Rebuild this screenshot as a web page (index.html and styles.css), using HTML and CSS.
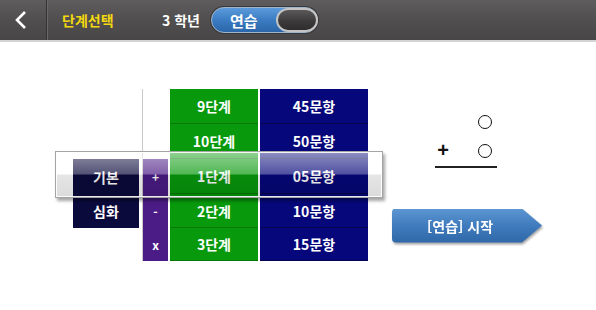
FILE: index.html
```html
<!DOCTYPE html>
<html lang="ko">
<head>
<meta charset="UTF-8">
<title>단계선택</title>
<link rel="stylesheet" href="styles.css">
</head>
<body>

<div class="topbar">
    <div class="back">
        <svg width="14" height="20" viewBox="0 0 14 20"><polyline points="11,2 3,10 11,18" fill="none" stroke="#fff" stroke-width="2.6" stroke-linejoin="miter"/></svg>
    </div>
    <div class="title">단계선택</div>
    <div class="grade">3 학년</div>
    <div class="toggle">
        <span class="toggle-label">연습</span>
        <span class="knob"></span>
    </div>
</div>

<div class="main">
    <div class="board">
        <div class="grid">
            <div class="label empty"></div>
            <div class="op empty"></div>
            <div class="step">9단계</div>
            <div class="count">45문항</div>

            <div class="label empty"></div>
            <div class="op empty"></div>
            <div class="step">10단계</div>
            <div class="count">50문항</div>

            <div class="label">기본</div>
            <div class="op">+</div>
            <div class="step">1단계</div>
            <div class="count">05문항</div>

            <div class="label">심화</div>
            <div class="op">-</div>
            <div class="step">2단계</div>
            <div class="count">10문항</div>

            <div class="label empty"></div>
            <div class="op">x</div>
            <div class="step">3단계</div>
            <div class="count">15문항</div>
        </div>
        <!-- selection glass over the middle row -->
        <div class="selector"></div>
    </div>

    <div class="side">
        <div class="equation">
            <div class="eq-row"><span class="sign"></span><span class="circle"></span></div>
            <div class="eq-row"><span class="sign">+</span><span class="circle"></span></div>
            <div class="eq-line"></div>
        </div>
        <div class="start-wrap">
            <div class="start">[연습] 시작</div>
        </div>
    </div>
</div>

</body>
</html>
```

FILE: styles.css
```css
body {
    margin: 0;
    padding: 0;
    background: #fff;
    font-family: "Noto Sans CJK KR", "Noto Sans", sans-serif;
}

.topbar {
    height: 40px;
    display: flex;
    align-items: center;
    background: linear-gradient(to bottom, #5e5c5c 0%, #504e4e 50%, #484646 100%);
    border-bottom: 2px solid #d4d4d4;
}

.back {
    width: 47px;
    height: 40px;
    display: flex;
    align-items: center;
    justify-content: center;
    border-right: 1px solid #353434;
    box-shadow: 1px 0 0 #6a6868;
    box-sizing: border-box;
    padding-right: 4px;
}

.title {
    margin-left: 15px;
    width: 100px;
    color: #f4d80f;
    font-weight: bold;
    font-size: 14px;
}

.grade {
    width: 49px;
    color: #fff;
    font-weight: bold;
    font-size: 14px;
}

.toggle {
    width: 107px;
    height: 26px;
    box-sizing: border-box;
    border-radius: 14px;
    border: 1px solid #9fb4cc;
    background: linear-gradient(to bottom, #5b9bdc 0%, #3b7cc2 50%, #2c66aa 100%);
    display: flex;
    align-items: center;
    justify-content: space-between;
    box-shadow: 0 0 0 1px #3a3838;
}

.toggle-label {
    color: #fff;
    font-weight: bold;
    font-size: 15px;
    margin-left: 18px;
}

.knob {
    width: 42px;
    height: 24px;
    box-sizing: border-box;
    border-radius: 13px;
    border: 2px solid #c4c4c4;
    background: linear-gradient(to bottom, #5a5858 0%, #3a3838 60%, #2e2c2c 100%);
    margin-right: -1px;
}

.main {
    display: flex;
    padding-top: 47px;
    padding-left: 73px;
}

.board {
    position: relative;
    width: 294px;
}

.grid {
    display: grid;
    grid-template-columns: 67px 26px 88px 108px;
    grid-template-rows: 35px 35px 35px 34px 33px;
    column-gap: 2px;
    color: #fff;
    font-weight: bold;
    font-size: 14px;
}

.grid > div {
    display: flex;
    align-items: center;
    justify-content: center;
}

.label {
    background: #0b0a3c;
    margin-right: 1px;
}

.label.empty {
    background: transparent;
}

.op {
    background: #4b1c86;
    border-left: 1px solid #c9c9c9;
    box-sizing: border-box;
    font-size: 12px;
}

.op.empty {
    background: transparent;
}

.step {
    background: #089a0c;
    border-bottom: 1px solid #067808;
    box-sizing: border-box;
}

.count {
    background: #06077a;
    border-bottom: 1px solid #05054f;
    box-sizing: border-box;
}

.selector {
    position: absolute;
    left: -18px;
    top: 62px;
    width: 328px;
    height: 47px;
    box-sizing: border-box;
    border: 1px solid #a4a4a4;
    background: linear-gradient(to bottom, rgba(255,255,255,0.55) 0%, rgba(255,255,255,0.3) 48%, rgba(0,0,0,0.1) 52%, rgba(0,0,0,0.14) 100%);
    box-shadow: inset 0 0 0 1px rgba(255,255,255,0.9), 2px 3px 3px rgba(0,0,0,0.35);
}

.side {
    margin-left: 25px;
    width: 152px;
    display: flex;
    flex-direction: column;
}

.equation {
    margin-left: 43px;
    width: 62px;
    margin-top: 18px;
}

.eq-row {
    display: flex;
    align-items: center;
    height: 29px;
}

.sign {
    width: 14px;
    margin-left: 1px;
    font-size: 20px;
    font-weight: bold;
    color: #111;
    text-align: center;
    font-family: "Liberation Sans", sans-serif;
}

.circle {
    width: 12px;
    height: 12px;
    border: 1.6px solid #111;
    border-radius: 50%;
    margin-left: 28px;
}

.eq-line {
    margin-top: 1px;
    height: 1.5px;
    background: #222;
}

.start-wrap {
    margin-top: 41px;
    filter: drop-shadow(1px 2px 1px rgba(0,0,0,0.35));
}

.start {
    width: 150px;
    height: 34px;
    clip-path: path('M4,0 H130 L150,17 L130,34 H4 Q0,34 0,30 V4 Q0,0 4,0 Z');
    background: linear-gradient(to bottom, #5c95d2 0%, #3f7bbd 50%, #2f68a8 100%);
    color: #fff;
    font-weight: bold;
    font-size: 14px;
    display: flex;
    align-items: center;
    justify-content: center;
    padding-right: 14px;
    box-sizing: border-box;
}
```
